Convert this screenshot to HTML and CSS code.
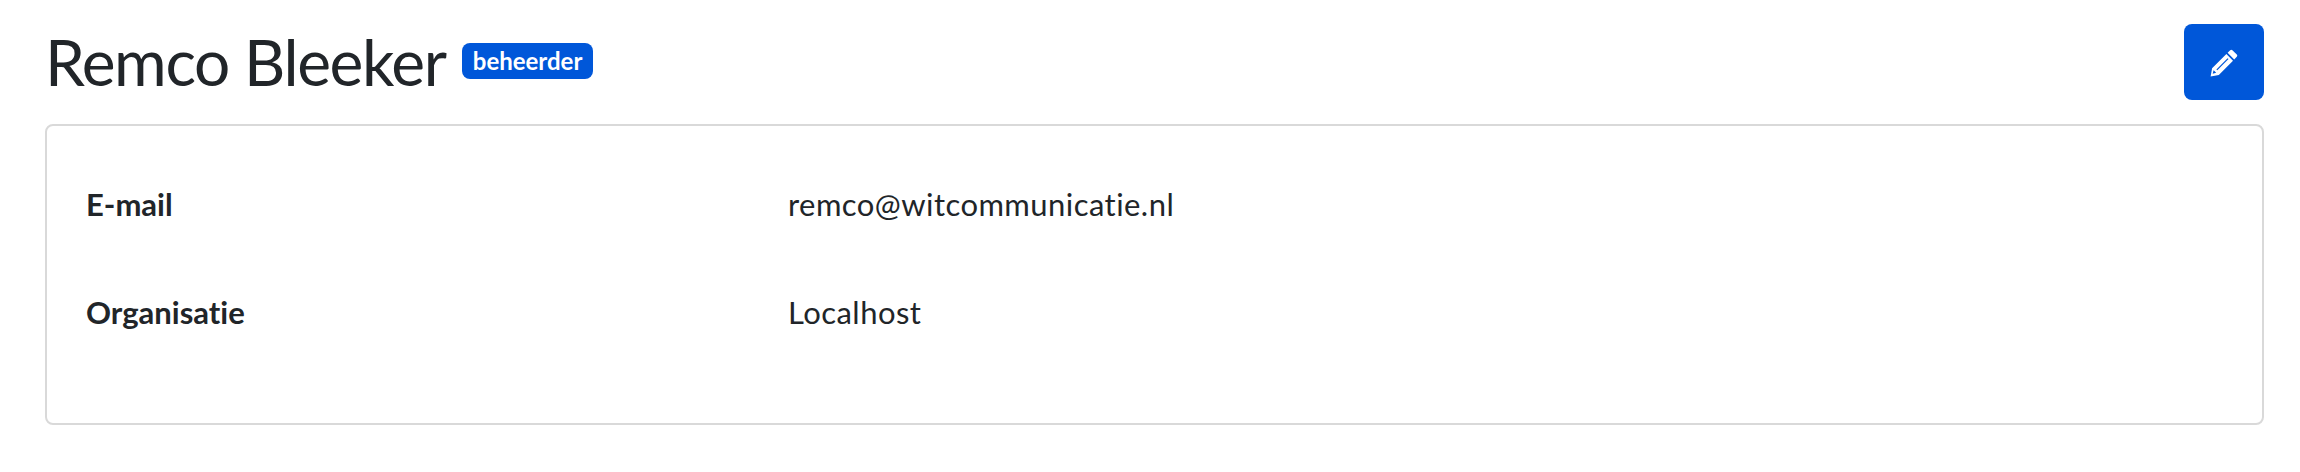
FILE: index.html
```html
<!DOCTYPE html>
<html lang="nl">
<head>
<meta charset="utf-8">
<title>Remco Bleeker</title>
<link rel="stylesheet" href="styles.css">
</head>
<body>
<main class="page">
  <header class="head">
    <h1 class="title">Remco Bleeker<span class="badge">beheerder</span></h1>
    <button class="btn" type="button" aria-label="Bewerken">
      <svg class="icon" viewBox="0 0 28 28" width="28" height="28"><path fill="#fff" fill-rule="evenodd" d="M20.2 1.2a1.6 1.6 0 0 1 2.2 0l4.4 4.4a1.6 1.6 0 0 1 0 2.2l-2.6 2.6-6.6-6.6zM16.4 5.1l6.6 6.6L8.8 25.9 0.6 27.4l1.5-8.2zM17.6 9.2 6.4 20.4l.9.9L18.5 10.1zM3.6 21.2l-.9 3.5 3.5-.9z"/></svg>
    </button>
  </header>
  <section class="card">
    <dl class="rows">
      <dt class="label">E-mail</dt>
      <dd class="value">remco@witcommunicatie.nl</dd>
      <dt class="label">Organisatie</dt>
      <dd class="value">Localhost</dd>
    </dl>
  </section>
</main>
</body>
</html>
```
FILE: styles.css
```css
* { box-sizing: border-box; }
html, body { margin: 0; background: #fff; }
body { font-family: Lato, "Noto Sans", sans-serif; color: #212529; font-variant-ligatures: none; }
.page { padding: 24px 36px 0 45px; }
.head { display: flex; justify-content: space-between; align-items: flex-start; height: 76px; margin-bottom: 24px; }
.title { margin: 0; font-size: 64px; font-weight: 400; letter-spacing: -1.35px; line-height: 76px; display: flex; align-items: center; gap: 16px; white-space: pre; }
.badge { background: #0057d9; color: #fff; font-size: 24px; font-weight: 700; letter-spacing: 0; line-height: 36px; height: 36px; padding: 0 11px; border-radius: 8px; margin-top: -2px; }
.btn { width: 80px; height: 76px; border: 0; border-radius: 8px; background: #0057d9; display: flex; align-items: center; justify-content: center; padding: 2px 0 0; }
.card { border: 2px solid #d9d9d9; border-radius: 8px; height: 301px; padding: 58px 39px 0; }
.rows { margin: 0; display: grid; grid-template-columns: 702px 1fr; grid-auto-rows: 108px; }
.label { font-size: 31px; font-weight: 700; line-height: 40px; }
.value { margin: 0; font-size: 31px; letter-spacing: 0.45px; line-height: 40px; }
```
